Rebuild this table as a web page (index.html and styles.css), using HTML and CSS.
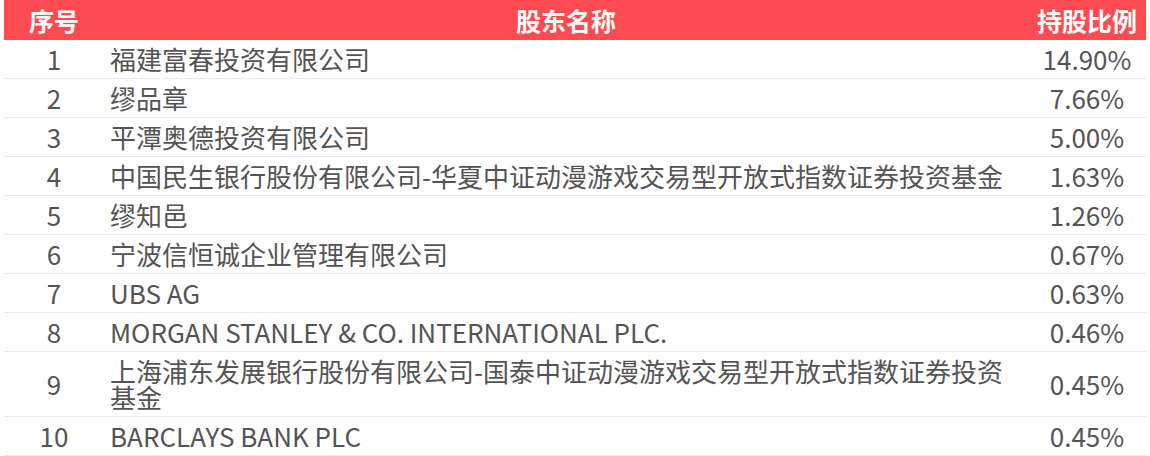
FILE: index.html
```html
<!DOCTYPE html>
<html lang="zh-CN">
<head>
<meta charset="utf-8">
<link rel="stylesheet" href="styles.css">
</head>
<body>
<table class="holders">
  <colgroup>
    <col class="c-idx">
    <col class="c-name">
    <col class="c-pct">
  </colgroup>
  <thead>
    <tr><th class="idx">序号</th><th class="name">股东名称</th><th class="pct">持股比例</th></tr>
  </thead>
  <tbody>
    <tr><td class="idx">1</td><td class="name">福建富春投资有限公司</td><td class="pct">14.90%</td></tr>
    <tr><td class="idx">2</td><td class="name">缪品章</td><td class="pct">7.66%</td></tr>
    <tr><td class="idx">3</td><td class="name">平潭奥德投资有限公司</td><td class="pct">5.00%</td></tr>
    <tr><td class="idx">4</td><td class="name">中国民生银行股份有限公司-华夏中证动漫游戏交易型开放式指数证券投资基金</td><td class="pct">1.63%</td></tr>
    <tr><td class="idx">5</td><td class="name">缪知邑</td><td class="pct">1.26%</td></tr>
    <tr><td class="idx">6</td><td class="name">宁波信恒诚企业管理有限公司</td><td class="pct">0.67%</td></tr>
    <tr><td class="idx">7</td><td class="name">UBS AG</td><td class="pct">0.63%</td></tr>
    <tr><td class="idx">8</td><td class="name">MORGAN STANLEY &amp; CO. INTERNATIONAL PLC.</td><td class="pct">0.46%</td></tr>
    <tr><td class="idx">9</td><td class="name">上海浦东发展银行股份有限公司-国泰中证动漫游戏交易型开放式指数证券投资基金</td><td class="pct">0.45%</td></tr>
    <tr><td class="idx">10</td><td class="name">BARCLAYS BANK PLC</td><td class="pct">0.45%</td></tr>
  </tbody>
</table>
</body>
</html>
```

FILE: styles.css
```css
html, body {
  margin: 0;
  padding: 0;
  background: #ffffff;
}
body {
  padding: 0 4px;
  font-family: "Noto Sans CJK SC", "Noto Sans", sans-serif;
}
.holders {
  width: 1142px;
  border-collapse: collapse;
  table-layout: fixed;
}
.c-idx { width: 100px; }
.c-name { width: 924px; }
.c-pct { width: 118px; }
.holders th {
  background: #fe4b51;
  color: #ffffff;
  font-weight: 700;
  font-size: 25px;
  height: 40px;
  padding: 0;
  line-height: 40px;
  text-align: center;
}
.holders th.pct {
  text-align: right;
  padding-right: 9px;
}
.holders td {
  font-size: 26px;
  color: #545454;
  line-height: 26px;
  padding: 6px 0;
  height: 26px;
  border-bottom: 1px solid #e9e9ef;
  vertical-align: middle;
}
.holders td.idx { text-align: center; }
.holders td.name { text-align: left; padding: 6px 6px; }
.holders td.pct { text-align: center; }
```
